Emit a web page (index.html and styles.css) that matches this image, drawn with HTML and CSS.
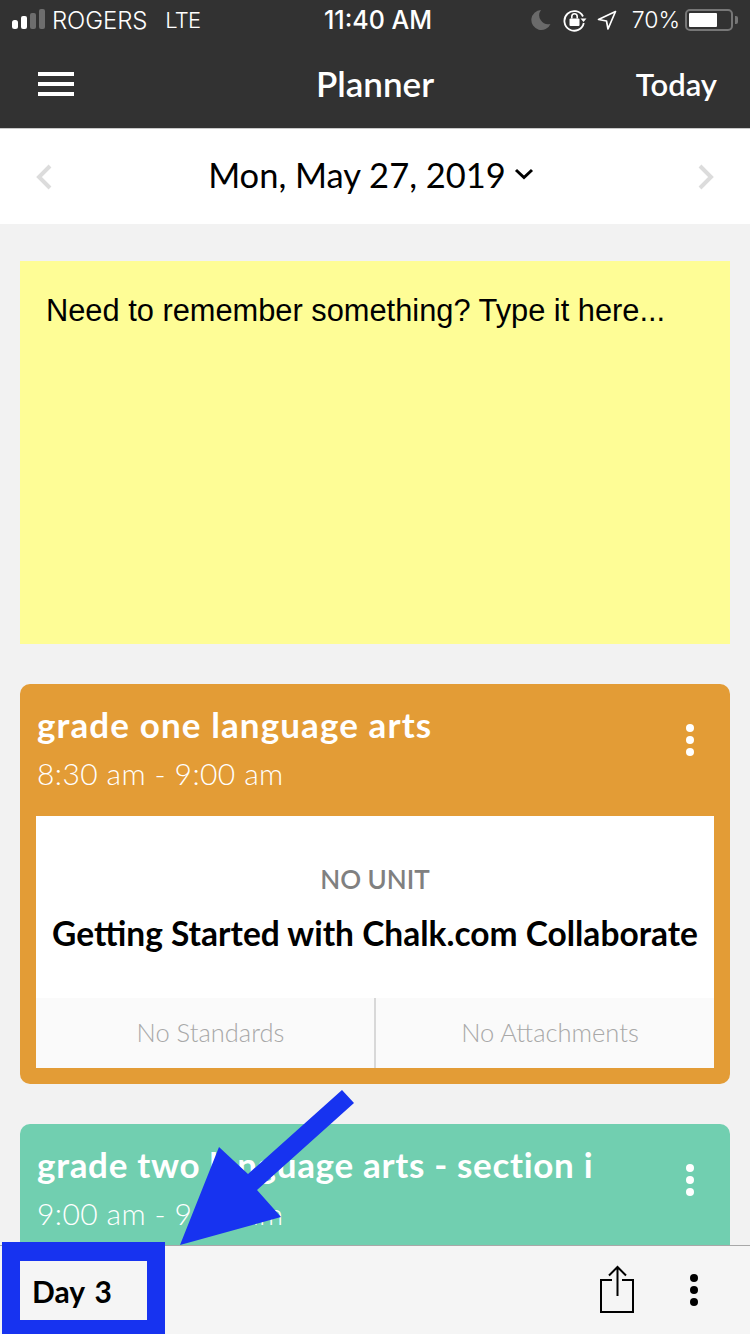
FILE: index.html
```html
<!DOCTYPE html>
<html lang="en">
<head>
    <meta charset="UTF-8">
    <meta name="viewport" content="width=device-width, initial-scale=1.0">
    <title>Planner</title>
    <link rel="stylesheet" href="styles.css">
</head>
<body>
<div class="app">
    <div class="top">
        <div class="status">
            <div class="status-left">
                <svg class="signal" width="36" height="24" viewBox="0 0 36 24">
                    <rect x="0" y="12" width="6" height="9" rx="2.5" fill="#fff"/>
                    <rect x="9" y="8" width="6" height="13" rx="2" fill="#fff"/>
                    <rect x="18" y="5" width="6" height="16" rx="2" fill="#6e6e6e"/>
                    <rect x="27" y="1" width="6" height="20" rx="2" fill="#6e6e6e"/>
                </svg>
                <span class="carrier">ROGERS</span>
                <span class="network">LTE</span>
            </div>
            <div class="clock">11:40 AM</div>
            <div class="status-right">
                <svg class="moon" width="20" height="22" viewBox="0 0 20 22"><path d="M10 1a10 10 0 1 0 9.500 14A9 9 0 0 1 10 1z" fill="#6a6a6a"/></svg>
                <svg width="24" height="24" viewBox="0 0 24 24" fill="none">
                    <path d="M20 8.500A9.800 9.800 0 1 0 20.800 15" stroke="#fff" stroke-width="1.800"/>
                    <path d="M17.500 10.500h6l-3 3.500z" fill="#fff"/>
                    <rect x="6.500" y="10.500" width="10" height="7.500" rx="1" fill="#fff"/>
                    <path d="M8.800 10.500V8.500a2.700 2.700 0 0 1 5.400 0v2" stroke="#fff" stroke-width="1.600"/>
                </svg>
                <svg class="gps" width="20" height="20" viewBox="0 0 20 20" fill="none"><path d="M18.500 1.500L1.500 9.500l8 1.500 1.500 8z" stroke="#fff" stroke-width="1.700" stroke-linejoin="round"/></svg>
                <span class="percent">70%</span>
                <div class="battery"><div class="battery-fill"></div></div>
                <div class="battery-tip"></div>
            </div>
        </div>
        <div class="navbar">
            <div class="menu-icon"><span></span><span></span><span></span></div>
            <h1>Planner</h1>
            <a class="today">Today</a>
        </div>
    </div>

    <div class="datebar">
        <svg class="arrow" width="16" height="26" viewBox="0 0 16 26" fill="none"><path d="M14 2L3 13l11 11" stroke="#dcdcdc" stroke-width="4"/></svg>
        <div class="date">
            <span>Mon, May 27, 2019</span>
            <svg width="20" height="12" viewBox="0 0 20 12" fill="none"><path d="M2 2l8 7.500L18 2" stroke="#000" stroke-width="3"/></svg>
        </div>
        <svg class="arrow" width="16" height="26" viewBox="0 0 16 26" fill="none"><path d="M2 2l11 11L2 24" stroke="#dcdcdc" stroke-width="4"/></svg>
    </div>

    <div class="content">
        <div class="note">Need to remember something? Type it here...</div>

        <div class="card orange">
            <div class="card-head">
                <div>
                    <div class="card-title">grade one language arts</div>
                    <div class="card-time">8:30 am - 9:00 am</div>
                </div>
                <div class="dots"><i></i><i></i><i></i></div>
            </div>
            <div class="card-body">
                <div class="lesson">
                    <div class="unit">NO UNIT</div>
                    <div class="lesson-name">Getting Started with Chalk.com Collaborate</div>
                </div>
                <div class="card-links">
                    <div>No Standards</div>
                    <div>No Attachments</div>
                </div>
            </div>
        </div>

        <div class="card green">
            <div class="card-head">
                <div>
                    <div class="card-title">grade two language arts - section i</div>
                    <div class="card-time">9:00 am - 9:30 am</div>
                </div>
                <div class="dots"><i></i><i></i><i></i></div>
            </div>
        </div>
    </div>

    <div class="toolbar">
        <div class="day">Day 3</div>
        <div class="tools">
            <svg width="36" height="48" viewBox="0 0 36 48" fill="none" stroke="#000" stroke-width="2">
                <path d="M12 15H1v32h32V15H22"/>
                <path d="M17.500 31V2M9 10.500L17.500 2 26 10.500"/>
            </svg>
            <div class="dots black"><i></i><i></i><i></i></div>
        </div>
    </div>
</div>

<!-- blue annotation drawn over the screenshot -->
<div class="mark-box"></div>
<svg class="mark-arrow" width="180" height="160" viewBox="175 1088 180 160">
    <polygon points="342,1090 354,1103 257,1190 281,1217 180,1245 219,1147 248,1174" fill="#1733f0"/>
</svg>
</body>
</html>
```

FILE: styles.css
```css
* {
    box-sizing: border-box;
}
body {
    margin: 0;
    font-family: Lato, "Open Sans", sans-serif;
    background-color: #f2f2f2;
}
.app {
    position: relative;
    width: 750px;
    height: 1334px;
    display: flex;
    flex-direction: column;
    overflow: hidden;
}
.top {
    height: 129px;
    flex: none;
    background-color: #323232;
    border-bottom: 1px solid #c8c8c8;
    color: white;
}
.status {
    height: 40px;
    padding: 0 10px 0 12px;
    display: grid;
    grid-template-columns: 1fr auto 1fr;
    align-items: center;
    font-family: Inter, Roboto, sans-serif;
    font-size: 23px;
}
.status-left {
    display: flex;
    align-items: center;
}
.signal {
    margin-right: 4px;
}
.carrier {
    font-size: 24px;
    font-weight: 300;
    letter-spacing: -0.1px;
}
.network {
    font-size: 22px;
    font-weight: 300;
    margin-left: 18px;
    letter-spacing: -0.8px;
}
.clock {
    margin-left: 4px;
    font-size: 25px;
    font-weight: 500;
}
.status-right {
    display: flex;
    align-items: center;
    justify-content: flex-end;
    gap: 10px;
}
.moon {
    margin-right: 2px;
}
.percent {
    font-weight: 300;
    margin-left: 5px;
}
.battery {
    width: 48px;
    height: 22px;
    margin-left: -5px;
    border: 2px solid #777;
    border-radius: 5px;
    padding: 2px;
}
.battery-fill {
    width: 28px;
    height: 100%;
    background-color: white;
    border-radius: 1px;
}
.battery-tip {
    width: 3px;
    height: 8px;
    margin-left: -8px;
    margin-right: 2px;
    background-color: #777;
    border-radius: 0 2px 2px 0;
}
.navbar {
    height: 88px;
    padding: 0 33px 0 33px;
    display: grid;
    grid-template-columns: 1fr auto 1fr;
    align-items: center;
}
.menu-icon {
    width: 36px;
    margin-left: 5px;
    display: flex;
    flex-direction: column;
    gap: 6px;
}
.menu-icon span {
    height: 4px;
    background-color: white;
}
.navbar h1 {
    margin: 0 0 2px;
    font-size: 35px;
    font-weight: 600;
}
.today {
    font-size: 31px;
    font-weight: 600;
    text-align: right;
}
.datebar {
    height: 95px;
    flex: none;
    padding: 0 36px;
    display: flex;
    align-items: center;
    justify-content: space-between;
    background-color: white;
}
.date {
    margin: 0 8px 5px 0;
    display: flex;
    align-items: center;
    gap: 8px;
    font-size: 34.5px;
    color: black;
}
.content {
    flex: 1;
    min-height: 0;
    overflow: hidden;
    padding: 37px 20px 0;
    display: flex;
    flex-direction: column;
    gap: 40px;
}
.note {
    height: 383px;
    flex: none;
    padding: 33px 26px;
    background-color: #fefd96;
    font-family: "Liberation Sans", Arial, sans-serif;
    font-size: 30.8px;
    line-height: 34px;
    color: black;
}
.card {
    flex: none;
    padding: 16px;
    border-radius: 10px;
    color: white;
}
.orange {
    height: 400px;
    background-color: #e39c36;
}
.green {
    height: 240px;
    background-color: #71cfb0;
}
.card-head {
    height: 116px;
    padding-left: 1px;
    display: flex;
    justify-content: space-between;
}
.card-title {
    font-size: 35px;
    font-weight: 700;
    line-height: 48px;
}
.orange .card-title {
    letter-spacing: 1.1px;
}
.green .card-title {
    letter-spacing: 0.68px;
}
.card-time {
    font-size: 30px;
    font-weight: 300;
    line-height: 50px;
    letter-spacing: 0.4px;
}
.dots {
    display: flex;
    flex-direction: column;
    gap: 4px;
    padding: 24px 20px 0 0;
}
.dots i {
    width: 8px;
    height: 8px;
    border-radius: 50%;
    background-color: white;
}
.card-body {
    background-color: white;
    color: black;
}
.lesson {
    height: 182px;
    padding-top: 46px;
    text-align: center;
}
.unit {
    font-size: 26px;
    font-weight: 600;
    line-height: 34px;
    color: #808080;
}
.lesson-name {
    margin-top: 17px;
    font-size: 33.5px;
    font-weight: 700;
    line-height: 40px;
}
.card-links {
    height: 70px;
    display: grid;
    grid-template-columns: 1fr 1fr;
    background-color: #fafafa;
    font-size: 25.5px;
    font-weight: 300;
    color: #a8a8a8;
    line-height: 68px;
    text-align: center;
}
.card-links div {
    padding-left: 10px;
}
.card-links div:last-child {
    margin-left: -1px;
    border-left: 2px solid #d8d8d8;
}
.toolbar {
    height: 89px;
    flex: none;
    padding: 0 52px 0 32px;
    display: flex;
    align-items: center;
    justify-content: space-between;
    background-color: #f5f5f5;
    border-top: 1px solid #a8a8a8;
}
.day {
    margin-top: 1px;
    font-size: 30px;
    font-weight: 700;
    word-spacing: 3px;
    color: black;
}
.tools {
    display: flex;
    align-items: center;
    gap: 54px;
}
.tools svg {
    margin-bottom: 2px;
}
.tools .dots {
    padding: 0;
    gap: 4px;
}
.dots.black i {
    background-color: black;
}
.mark-box {
    position: absolute;
    left: 2px;
    top: 1242px;
    width: 163px;
    height: 92px;
    border: solid #1733f0;
    border-width: 19px 18px 14px;
}
.mark-arrow {
    position: absolute;
    left: 175px;
    top: 1088px;
}
```
